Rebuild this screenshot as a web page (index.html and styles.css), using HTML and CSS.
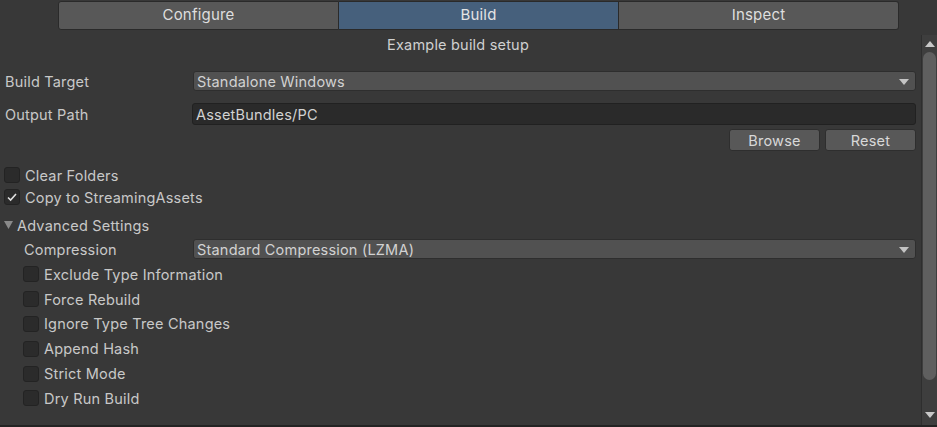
FILE: index.html
```html
<!DOCTYPE html>
<html>
<head>
<meta charset="utf-8">
<link rel="stylesheet" href="styles.css">
</head>
<body>
<div class="window">
  <div class="main">
    <div class="tabs">
      <div class="tab">Configure</div>
      <div class="tab active">Build</div>
      <div class="tab">Inspect</div>
    </div>
    <div class="content">
      <div class="title">Example build setup</div>
      <div class="row r-target">
        <div class="label">Build Target</div>
        <div class="dropdown"><span>Standalone Windows</span><svg class="arrow" width="10" height="6" viewBox="0 0 10 6"><path d="M0 0H10L5 6Z" fill="#c4c4c4"/></svg></div>
      </div>
      <div class="row r-path">
        <div class="label">Output Path</div>
        <div class="textfield">AssetBundles/PC</div>
      </div>
      <div class="buttons">
        <div class="btn">Browse</div>
        <div class="btn">Reset</div>
      </div>
      <div class="check top first"><span class="box"></span><span>Clear Folders</span></div>
      <div class="check top"><span class="box"><svg width="12" height="12" viewBox="0 0 12 12"><path d="M2 6.5L4.6 9L10 3" stroke="#e0e0e0" stroke-width="1.6" fill="none"/></svg></span><span>Copy to StreamingAssets</span></div>
      <div class="foldout"><svg width="9" height="8" viewBox="0 0 9 8"><path d="M0 0H9L4.5 8Z" fill="#8a8a8a"/></svg><span>Advanced Settings</span></div>
      <div class="row r-comp">
        <div class="label indent">Compression</div>
        <div class="dropdown"><span>Standard Compression (LZMA)</span><svg class="arrow" width="10" height="6" viewBox="0 0 10 6"><path d="M0 0H10L5 6Z" fill="#c4c4c4"/></svg></div>
      </div>
      <div class="check sub first-sub"><span class="box"></span><span>Exclude Type Information</span></div>
      <div class="check sub"><span class="box"></span><span>Force Rebuild</span></div>
      <div class="check sub"><span class="box"></span><span>Ignore Type Tree Changes</span></div>
      <div class="check sub"><span class="box"></span><span>Append Hash</span></div>
      <div class="check sub"><span class="box"></span><span>Strict Mode</span></div>
      <div class="check sub"><span class="box"></span><span>Dry Run Build</span></div>
    </div>
  </div>
  <div class="scrollbar">
    <svg class="sarrow" width="10" height="6" viewBox="0 0 10 6"><path d="M0 6H10L5 0Z" fill="#c8c8c8"/></svg>
    <div class="thumb"></div>
    <svg class="sarrow down" width="10" height="6" viewBox="0 0 10 6"><path d="M0 0H10L5 6Z" fill="#c8c8c8"/></svg>
  </div>
</div>
</body>
</html>
```
FILE: styles.css
```css
html, body {
  margin: 0;
  padding: 0;
  background: #383838;
}
body {
  font-family: Inter, "Noto Sans", sans-serif;
  font-size: 14.5px;
  letter-spacing: 0.2px;
  color: #c8c8c8;
  width: 937px;
  height: 427px;
  overflow: hidden;
}
.window {
  display: flex;
  height: 425px;
  border-bottom: 2px solid #232323;
}
.main {
  flex: 1;
  display: flex;
  flex-direction: column;
}
.tabs {
  display: flex;
  margin: 1px 0 0 58px;
  width: 841px;
  height: 29px;
}
.tab {
  flex: 1;
  background: #585858;
  border: 1px solid #2a2a2a;
  border-left: none;
  display: flex;
  align-items: center;
  justify-content: center;
  color: #dedede;
  font-size: 15px;
  padding-bottom: 2px;
  box-sizing: border-box;
}
.tab:first-child {
  border-left: 1px solid #2a2a2a;
  border-radius: 3px 0 0 3px;
}
.tab:last-child {
  border-radius: 0 3px 3px 0;
}
.tab.active {
  background: #46607c;
  color: #e4e4e4;
}
.content {
  padding: 0 5px 0 0;
}
.title {
  text-align: center;
  height: 30px;
  line-height: 30px;
  color: #d0d0d0;
}
.row {
  display: flex;
  align-items: center;
  height: 22px;
}
.r-target { margin-top: 10px; }
.r-path { margin-top: 11px; }
.label {
  width: 192px;
  padding-left: 5px;
  box-sizing: border-box;
  flex: none;
}
.label.indent { padding-left: 24px; }
.dropdown {
  flex: 1;
  height: 20px;
  margin-left: 1px;
  background: #515151;
  border: 1px solid #2e2e2e;
  border-radius: 3px;
  display: flex;
  align-items: center;
  justify-content: space-between;
  padding: 0 6px 0 3px;
  color: #d2d2d2;
  box-sizing: border-box;
}
.arrow { margin-top: 1px; }
.textfield {
  flex: 1;
  height: 22px;
  background: #2a2a2a;
  border: 1px solid #212121;
  border-radius: 3px;
  display: flex;
  align-items: center;
  padding: 0 3px;
  color: #d2d2d2;
  box-sizing: border-box;
}
.buttons {
  display: flex;
  justify-content: flex-end;
  gap: 5px;
  margin-top: 4px;
}
.btn {
  width: 91px;
  height: 22px;
  background: #585858;
  border: 1px solid #2e2e2e;
  border-radius: 3px;
  display: flex;
  align-items: center;
  justify-content: center;
  box-sizing: border-box;
  color: #d8d8d8;
  padding-top: 1px;
}
.check {
  display: flex;
  align-items: center;
  gap: 5px;
  height: 22px;
}
.check.top { padding-left: 4px; }
.check.first { margin-top: 13px; }
.check.sub { padding-left: 23px; height: 24.8px; }
.check.first-sub { margin-top: 1px; }
.box {
  width: 16px;
  height: 16px;
  box-sizing: border-box;
  background: #2b2b2b;
  border: 1px solid #232323;
  border-radius: 3px;
  display: flex;
  align-items: center;
  justify-content: center;
  flex: none;
}
.foldout {
  display: flex;
  align-items: center;
  gap: 4px;
  padding-left: 4px;
  height: 22px;
  margin-top: 6px;
}
.r-comp { margin-top: 1px; height: 24px; }
.scrollbar {
  width: 15px;
  flex: none;
  margin-top: 35px;
  background: #3e3e3e;
  border-left: 1px solid #2e2e2e;
  display: flex;
  flex-direction: column;
  align-items: center;
}
.sarrow { margin-top: 6px; flex: none; }
.thumb {
  width: 13px;
  height: 328px;
  margin-top: 5px;
  background: #5f5f5f;
  border-radius: 7px;
}
.sarrow.down { margin-top: auto; margin-bottom: 7px; }
```
